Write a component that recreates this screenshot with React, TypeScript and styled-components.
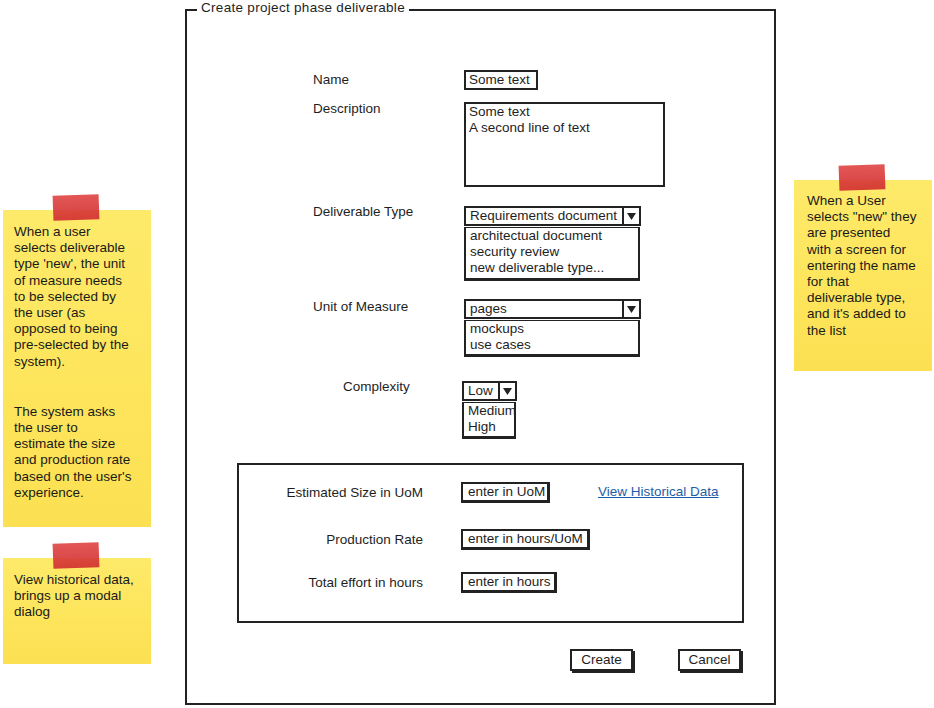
import styled, { createGlobalStyle } from 'styled-components';

const GlobalStyle = createGlobalStyle`
  body {
    margin: 0;
    background: #fff;
    color: #1e1e1e;
    font-family: "Liberation Sans", Arial, sans-serif;
    font-size: 13.5px;
  }
  * { box-sizing: border-box; }
`;

const Canvas = styled.div`
  display: flex;
  align-items: flex-start;
  width: 934px;
  height: 708px;
  overflow: hidden;
`;

const NotesColumn = styled.div`
  display: flex;
  flex-direction: column;
  gap: 31px;
  width: 151px;
  padding: 210px 0 0 3px;
`;

const RightColumn = styled.div`
  margin: 180px 0 0 18px;
  width: 138px;
`;

const Note = styled.div<{ $h: number; $pad: string }>`
  position: relative;
  height: ${p => p.$h}px;
  padding: ${p => p.$pad};
  background: linear-gradient(180deg, #feea6a 0%, #fde55c 55%, #fce052 100%);
  line-height: 16.2px;
  font-size: 13.5px;
  color: #1a1a1a;
`;

const Tape = styled.div<{ $left: number }>`
  position: absolute;
  top: -15px;
  left: ${p => p.$left}px;
  width: 46px;
  height: 25px;
  background: linear-gradient(180deg, #e04848 0%, #d23030 100%);
  opacity: 0.92;
  transform: rotate(-2deg);
`;

const Para = styled.p<{ $gap?: number }>`
  margin: ${p => p.$gap ?? 0}px 0 0;
`;

const Frame = styled.div`
  position: relative;
  margin: 9px 0 0 34px;
  width: 591px;
  height: 696px;
  border: 2px solid #222;
  padding: 59px 0 0 126px;
`;

const Legend = styled.div`
  position: absolute;
  top: -11px;
  left: 10px;
  padding: 0 4px;
  background: #fff;
  line-height: 16px;
  letter-spacing: 0.3px;
`;

const Row = styled.div<{ $top: number }>`
  display: flex;
  align-items: flex-start;
  margin-top: ${p => p.$top}px;
`;

const Label = styled.div<{ $dy?: number; $indent?: number; $w?: number }>`
  flex-shrink: 0;
  width: ${p => p.$w ?? 151}px;
  padding-left: ${p => p.$indent ?? 0}px;
  margin-top: ${p => p.$dy ?? 0}px;
  line-height: 16px;
`;

const TextBox = styled.div<{ $w: number; $h?: number }>`
  width: ${p => p.$w}px;
  height: ${p => p.$h ?? 20}px;
  border: 2px solid #222;
  padding: 0 3px;
  line-height: 16px;
  white-space: nowrap;
  overflow: hidden;
`;

const TextArea = styled.div`
  width: 201px;
  height: 85px;
  border: 2px solid #222;
  padding: 0 3px;
  line-height: 16px;
`;

const Combo = styled.div<{ $w: number }>`
  display: flex;
  flex-direction: column;
  gap: 1px;
  width: ${p => p.$w}px;
`;

const SelectBox = styled.div`
  display: flex;
  height: 20px;
  border: 2px solid #222;
  line-height: 16px;
`;

const SelectValue = styled.div`
  flex: 1;
  padding: 0 4px;
  white-space: nowrap;
  overflow: hidden;
`;

const Arrow = styled.div`
  display: flex;
  align-items: center;
  justify-content: center;
  width: 17px;
  border-left: 2px solid #222;
`;

const List = styled.div<{ $h: number }>`
  width: calc(100% - 1px);
  height: ${p => p.$h}px;
  border: 2px solid #222;
  border-top-width: 1px;
  border-bottom-width: 3px;
  padding: 0 4px;
  line-height: 16px;
  white-space: nowrap;
  overflow: hidden;
`;

const InnerBox = styled.div`
  margin: 24px 0 0 -76px;
  width: 507px;
  height: 160px;
  border: 2px solid #222;
  padding-top: 17px;
`;

const InnerRow = styled.div<{ $top: number }>`
  display: flex;
  align-items: center;
  margin-top: ${p => p.$top}px;
`;

const InnerLabel = styled.div`
  width: 184px;
  margin-right: 38px;
  text-align: right;
  line-height: 16px;
`;

const Field = styled.div<{ $w: number }>`
  width: ${p => p.$w}px;
  height: 21px;
  border: 2px solid #222;
  border-right-width: 3px;
  border-bottom-width: 3px;
  padding: 0 5px;
  line-height: 16px;
  white-space: nowrap;
`;

const Link = styled.a`
  margin-left: 48px;
  margin-top: -2px;
  color: #1d5ea8;
  text-decoration: underline;
  line-height: 16px;
`;

const ButtonBar = styled.div`
  display: flex;
  justify-content: flex-end;
  gap: 45px;
  margin-top: 26px;
  padding-right: 33px;
`;

const Button = styled.div`
  width: 63px;
  height: 22px;
  border: 2px solid #222;
  box-shadow: 2px 2px 0 #222;
  text-align: center;
  line-height: 18px;
`;

const DownArrow = () => (
  <svg width="9" height="7" viewBox="0 0 9 7">
    <path d="M0 0 L9 0 L4.5 7 Z" fill="#222" />
  </svg>
);

export default function App() {
  return (
    <>
      <GlobalStyle />
      <Canvas>
        <NotesColumn>
          <Note $h={317} $pad="14px 6px 0 11px">
            <Tape $left={50} />
            <Para>
              When a user<br />selects deliverable<br />type 'new', the unit<br />of measure needs<br />
              to be selected by<br />the user (as<br />opposed to being<br />pre-selected by the<br />system).
            </Para>
            <Para $gap={34}>
              The system asks<br />the user to<br />estimate the size<br />and production rate<br />
              based on the user's<br />experience.
            </Para>
          </Note>
          <Note $h={106} $pad="14px 6px 0 11px">
            <Tape $left={50} />
            <Para>
              View historical data,<br />brings up a modal<br />dialog
            </Para>
          </Note>
        </NotesColumn>

        <Frame>
          <Legend>Create project phase deliverable</Legend>

          <Row $top={0}>
            <Label $dy={2}>Name</Label>
            <TextBox $w={74}>Some text</TextBox>
          </Row>

          <Row $top={12}>
            <Label $dy={-1}>Description</Label>
            <TextArea>
              Some text<br />A second line of text
            </TextArea>
          </Row>

          <Row $top={19}>
            <Label $dy={-2}>Deliverable Type</Label>
            <Combo $w={177}>
              <SelectBox>
                <SelectValue>Requirements document</SelectValue>
                <Arrow><DownArrow /></Arrow>
              </SelectBox>
              <List $h={54}>
                architectual document<br />security review<br />new deliverable type...
              </List>
            </Combo>
          </Row>

          <Row $top={18}>
            <Label $dy={0}>Unit of Measure</Label>
            <Combo $w={177}>
              <SelectBox>
                <SelectValue>pages</SelectValue>
                <Arrow><DownArrow /></Arrow>
              </SelectBox>
              <List $h={37}>
                mockups<br />use cases
              </List>
            </Combo>
          </Row>

          <Row $top={24}>
            <Label $dy={-2} $indent={30} $w={149}>Complexity</Label>
            <Combo $w={55}>
              <SelectBox>
                <SelectValue>Low</SelectValue>
                <Arrow><DownArrow /></Arrow>
              </SelectBox>
              <List $h={37}>
                Medium<br />High
              </List>
            </Combo>
          </Row>

          <InnerBox>
            <InnerRow $top={0}>
              <InnerLabel>Estimated Size in UoM</InnerLabel>
              <Field $w={89}>enter in UoM</Field>
              <Link href="#">View Historical Data</Link>
            </InnerRow>
            <InnerRow $top={26}>
              <InnerLabel>Production Rate</InnerLabel>
              <Field $w={129}>enter in hours/UoM</Field>
            </InnerRow>
            <InnerRow $top={22}>
              <InnerLabel>Total effort in hours</InnerLabel>
              <Field $w={96}>enter in hours</Field>
            </InnerRow>
          </InnerBox>

          <ButtonBar>
            <Button>Create</Button>
            <Button>Cancel</Button>
          </ButtonBar>
        </Frame>

        <RightColumn>
          <Note $h={191} $pad="13px 4px 0 13px">
            <Tape $left={45} />
            <Para>
              When a User<br />selects "new" they<br />are presented<br />with a screen for<br />
              entering the name<br />for that<br />deliverable type,<br />and it's added to<br />the list
            </Para>
          </Note>
        </RightColumn>
      </Canvas>
    </>
  );
}
